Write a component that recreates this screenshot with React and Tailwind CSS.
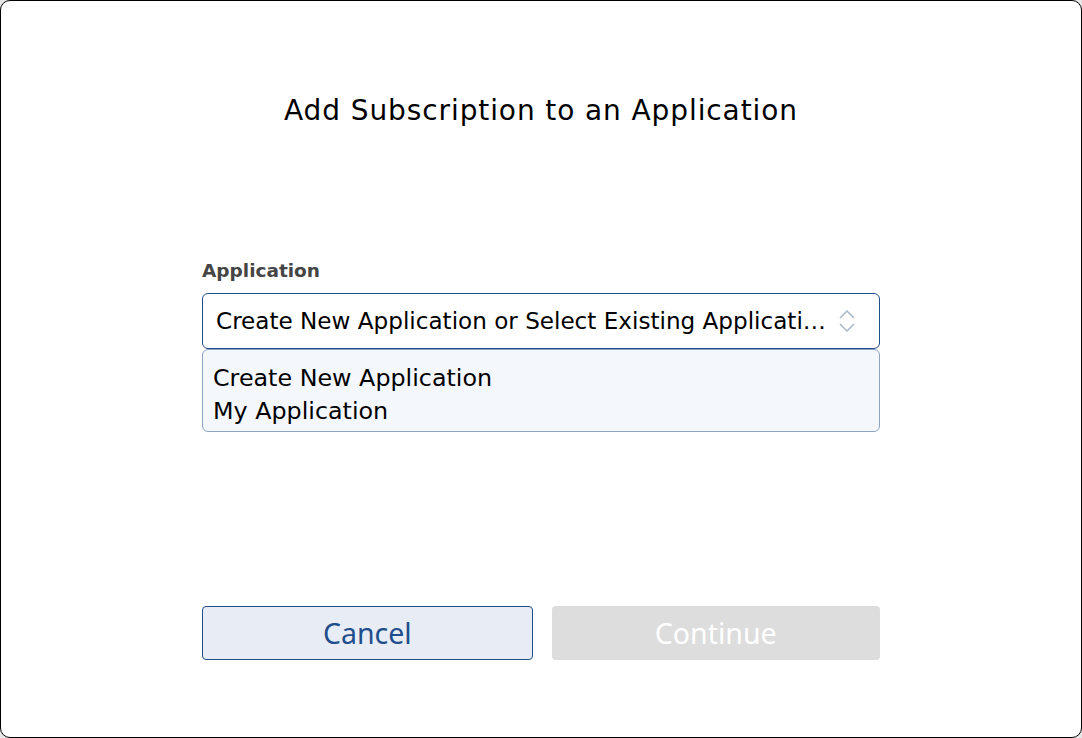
export default function App() {
  const font = { fontFamily: '"DejaVu Sans", "Noto Sans", sans-serif' };
  const btnFont = { fontFamily: '"Noto Sans", "Open Sans", sans-serif' };
  return (
    <div className="w-[1082px] h-[738px] bg-[#e6e6e6]" style={font}>
      <div className="w-full h-full bg-white border border-black rounded-[10px] flex flex-col items-center">
        <h1 className="mt-[92px] text-[28px] leading-[36px] tracking-[0.9px] text-black">
          Add Subscription to an Application
        </h1>

        <div className="mt-[130px] w-[678px] flex flex-col">
          <label className="text-[18.5px] leading-[24px] font-semibold text-[#454545]">Application</label>
          <div className="mt-[10px] h-[56px] border border-[#1f4e8c] rounded-[6px] flex items-center justify-between pl-[13px] pr-[22px]">
            <span className="pt-[1px] whitespace-nowrap text-[23.1px] text-black">
              Create New Application or Select Existing Applicati…
            </span>
            <svg width="20" height="28" viewBox="0 0 20 28" fill="none" stroke="#a9b6c8" strokeWidth="1.5">
              <path d="M3 11 L10 4 L17 11" />
              <path d="M3 17 L10 24 L17 17" />
            </svg>
          </div>
          <div className="h-[83px] bg-[#f4f7fc] border border-[#8ea3c2] rounded-[6px] pl-[10px] pt-[12px] text-[23.8px] leading-[33px] text-black">
            <div>Create New Application</div>
            <div>My Application</div>
          </div>
        </div>

        <div className="mt-[174px] w-[678px] flex gap-[19px]" style={btnFont}>
          <button className="flex-1 h-[54px] bg-[#e8edf5] border border-[#1f4e8c] rounded-[4px] text-[28.5px] text-[#1f4e8c]">
            Cancel
          </button>
          <button className="flex-1 h-[54px] bg-[#dddddd] rounded-[4px] text-[28.5px] text-white">
            Continue
          </button>
        </div>
      </div>
    </div>
  );
}
